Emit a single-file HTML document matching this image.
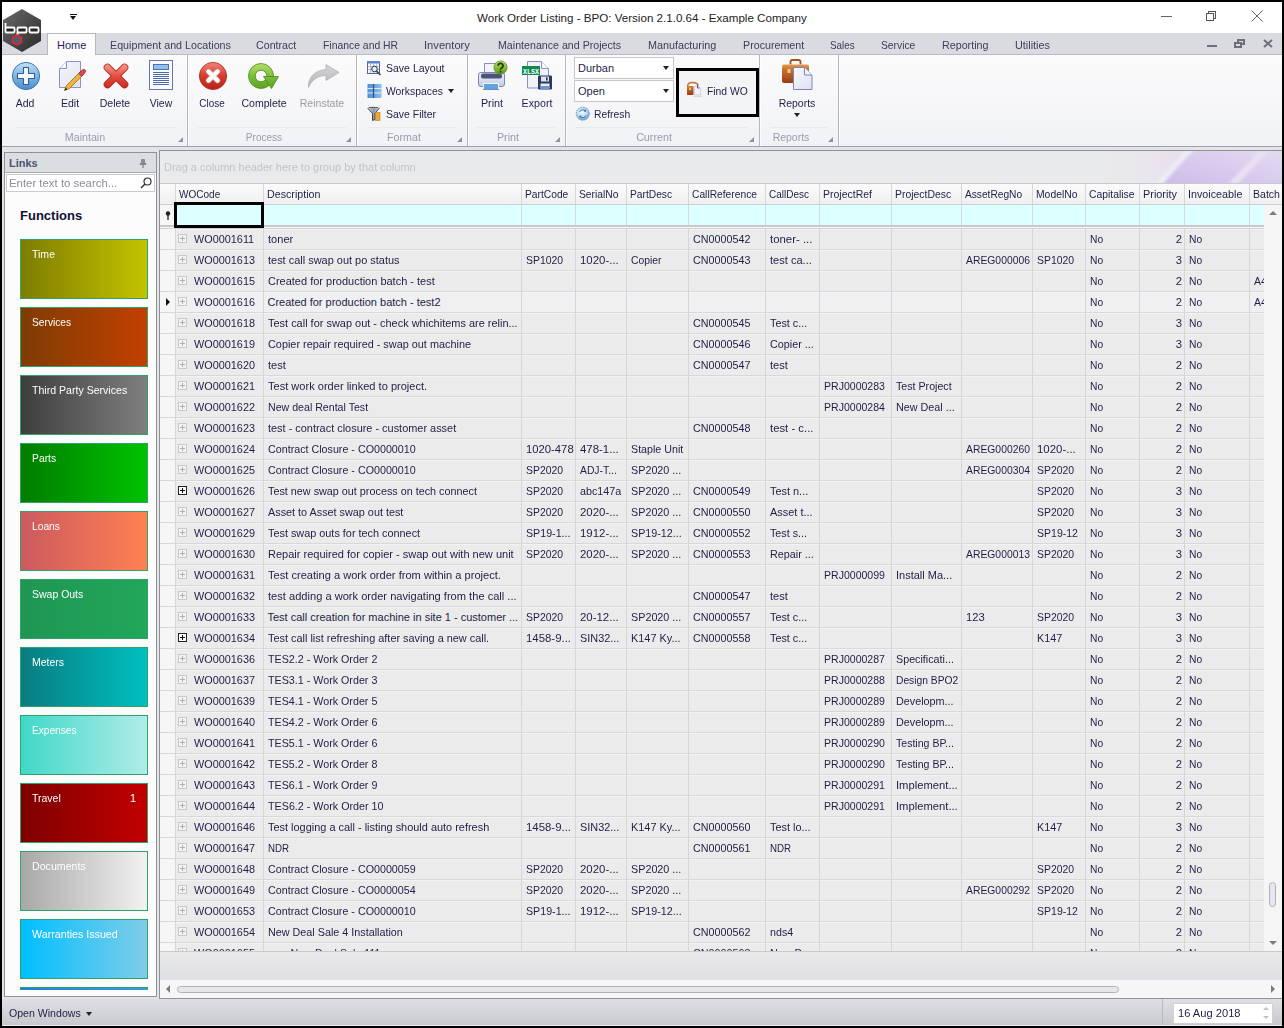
<!DOCTYPE html>
<html><head><meta charset="utf-8">
<style>
*{box-sizing:border-box;margin:0;padding:0}
html,body{width:1284px;height:1028px;overflow:hidden;background:#000;font-family:"Liberation Sans",sans-serif;font-size:11px;color:#1f1f3f}
.abs{position:absolute}
#titlebar{position:absolute;left:2px;top:2px;width:1280px;height:31px;background:#fff}
#title{position:absolute;left:477px;top:10.5px;font-size:11.6px;color:#222;white-space:nowrap}
#tabstrip{position:absolute;left:2px;top:33px;width:1280px;height:22px;background:#dadbe0;border-bottom:1px solid #b9bbc2}
.tab{position:absolute;top:38.5px;white-space:nowrap;color:#3b3d5a}
#hometab{position:absolute;left:47px;top:33px;width:49px;height:23px;background:#fbfbfc;border:1px solid #b6b8bf;border-bottom:none}
#ribbon{position:absolute;left:2px;top:55px;width:1280px;height:92px;background:linear-gradient(#fbfbfc,#f1f2f5);border-bottom:1px solid #9fa1a6}
.gsep{position:absolute;top:55px;width:1px;height:91px;background:#b4b7c0;box-shadow:1px 0 #fdfdfe}
.dl{position:absolute;width:0;height:0;border-left:5px solid transparent;border-bottom:5px solid #9092a0}
.glab{position:absolute;top:131px;color:#9a9cae;white-space:nowrap}
.gline{position:absolute;top:127px;height:1px;background:#e9eaee}
.blab{position:absolute;top:97px;white-space:nowrap;color:#1f1f46;text-align:center}
.slab{position:absolute;white-space:nowrap;color:#1f1f46}
#content{position:absolute;left:2px;top:147px;width:1280px;height:852px;background:#e3e4e8}
#links{position:absolute;left:4px;top:152px;width:153px;height:845px;background:#fcfcfc;border:1px solid #8f9196}
#linkshead{position:absolute;left:5px;top:153px;width:151px;height:20px;background:#dcdde1;border-bottom:1px solid #aaacb2}
#search{position:absolute;left:6px;top:174px;width:149px;height:18px;background:#fff;border:1px solid #c9cbd0}
.tile{position:absolute;left:20px;width:128px;height:60px;border:1px solid #2ea568}
.tt{position:absolute;left:11px;top:8px;color:#fff;white-space:nowrap}
.tnum{position:absolute;right:11px;top:8px;color:#fff}
#grid{position:absolute;left:159px;top:150px;width:1123px;height:849px;background:#e9e9eb;border:1px solid #8f9196;border-right:none}
#grouppanel{position:absolute;left:160px;top:151px;width:1122px;height:33px;background:#e9eaec;border-bottom:1px solid #c8c9cc}
#swoosh{position:absolute;left:1100px;top:151px;width:182px;height:32px;overflow:hidden}
#grptext{position:absolute;left:164px;top:161px;color:#b8b9be;white-space:nowrap}
#hdrrow{position:absolute;left:160px;top:184px;width:1122px;height:21px;background:linear-gradient(#fbfbfb,#f0f0f1);border-bottom:1px solid #cfd0d4}
.hc{position:absolute;top:184px;height:20px;border-left:1px solid #d6d7da;}
.hc span{position:absolute;left:3px;top:4px;white-space:nowrap;color:#1f1f46}
#filterrow{position:absolute;left:175px;top:205px;width:1089px;height:20px;background:#dcffff}
.fc{position:absolute;top:205px;height:20px;border-left:1px solid #d0dcdf}
#fsep{position:absolute;left:160px;top:225px;width:1104px;height:4px;background:#f7f7f7;border-top:2px solid #c9cacd;border-bottom:1px solid #d0d1d4}
#indcol{position:absolute;left:160px;top:184px;width:15px;height:767px;background:#f6f6f7}
#bodyclip{position:absolute;left:160px;top:229px;width:1104px;height:722px;overflow:hidden}
#bodyinner{position:absolute;left:-160px;top:-229px;width:1300px;height:1000px}
.row{position:absolute;left:175px;width:1125px;height:21px;background:#ebebeb;border-bottom:1px solid #d8d8da;box-shadow:inset 0 1px #f3f3f3}
.row.foc{background:#eff0f2}
.irow{position:absolute;left:160px;width:15px;height:21px;background:#f6f6f7;border-bottom:1px solid #d8d8da}
.row .c{position:absolute;top:4px;white-space:nowrap;color:#1f1f46}
.row .c.r{left:auto}
.vl{position:absolute;top:229px;width:1px;height:722px;background:#d5d6d9}
.exp{position:absolute;left:3px;top:5px;width:9px;height:9px;border:1px solid #c8c8c8;background:#f4f4f4}
.exp:before{content:"";position:absolute;left:1px;top:3px;width:5px;height:1px;background:#b0b0b0}
.exp:after{content:"";position:absolute;left:3px;top:1px;width:1px;height:5px;background:#b0b0b0}
.expd{position:absolute;left:3px;top:5px;width:9px;height:9px;border:1px solid #222;background:#fff}
.expd:before{content:"";position:absolute;left:1px;top:3px;width:5px;height:1px;background:#111}
.expd:after{content:"";position:absolute;left:3px;top:1px;width:1px;height:5px;background:#111}
.ind{position:absolute;left:-9px;top:6px;width:0;height:0;border-left:4px solid #111;border-top:4px solid transparent;border-bottom:4px solid transparent}
#vscroll{position:absolute;left:1264px;top:205px;width:18px;height:746px;background:#f5f5f6}
#footer{position:absolute;left:160px;top:951px;width:1122px;height:29px;background:linear-gradient(#e9e9eb,#dedfe2);border-top:1px solid #c9cacd}
#hscroll{position:absolute;left:160px;top:980px;width:1122px;height:18px;background:#f6f6f7}
#status{position:absolute;left:2px;top:999px;width:1280px;height:27px;background:linear-gradient(#dfe0e4,#c8c9ce);border-bottom:1px solid #e8e9ec}
#datebox{position:absolute;left:1173px;top:1003px;width:100px;height:21px;background:#fff;border:1px solid #d0d1d5}
.combo{position:absolute;left:574px;width:100px;height:22px;background:#fff;border:1px solid #c5c7cc}
.combo span{position:absolute;left:3px;top:4px;color:#1f1f46}
.combo i{position:absolute;right:4px;top:8px;width:0;height:0;border-left:3.5px solid transparent;border-right:3.5px solid transparent;border-top:4px solid #222}
#findwo{position:absolute;left:676px;top:68px;width:83px;height:49px;border:3px solid #000;background:#f3f4f6}
</style></head><body>
<div id="titlebar"></div>
<div id="title">Work Order Listing - BPO: Version 2.1.0.64 - Example Company</div>
<!-- window controls -->
<div class="abs" style="left:1161px;top:16px;width:11px;height:1px;background:#666"></div>
<div class="abs" style="left:1208px;top:11px;width:8px;height:8px;border:1px solid #555"></div>
<div class="abs" style="left:1206px;top:13px;width:8px;height:8px;border:1px solid #555;background:#fff"></div>
<svg class="abs" style="left:1251px;top:10px" width="12" height="12"><path d="M0.5 0.5L11.5 11.5M11.5 0.5L0.5 11.5" stroke="#666" stroke-width="1"/></svg>
<!-- quick access -->
<div class="abs" style="left:70px;top:14px;width:7px;height:1px;background:#111"></div>
<div class="abs" style="left:70px;top:16px;width:0;height:0;border-left:3.5px solid transparent;border-right:3.5px solid transparent;border-top:4px solid #111"></div>

<div id="tabstrip"></div>
<div id="hometab"></div>
<span class="tab" style="left:57px;color:#1f1f5a">Home</span>
<span class="tab" style="left:110px;transform:scaleX(0.974);transform-origin:left;">Equipment and Locations</span><span class="tab" style="left:256px;transform:scaleX(0.970);transform-origin:left;">Contract</span><span class="tab" style="left:323px;transform:scaleX(0.945);transform-origin:left;">Finance and HR</span><span class="tab" style="left:424px;transform:scaleX(1.015);transform-origin:left;">Inventory</span><span class="tab" style="left:498px;transform:scaleX(0.968);transform-origin:left;">Maintenance and Projects</span><span class="tab" style="left:648px;transform:scaleX(0.980);transform-origin:left;">Manufacturing</span><span class="tab" style="left:743px;transform:scaleX(0.972);transform-origin:left;">Procurement</span><span class="tab" style="left:830px;transform:scaleX(0.900);transform-origin:left;">Sales</span><span class="tab" style="left:881px;transform:scaleX(0.936);transform-origin:left;">Service</span><span class="tab" style="left:942px;transform:scaleX(0.974);transform-origin:left;">Reporting</span><span class="tab" style="left:1015px;transform:scaleX(0.986);transform-origin:left;">Utilities</span>
<!-- mdi controls -->
<div class="abs" style="left:1207px;top:45px;width:10px;height:2px;background:#6d6f7a"></div>
<div class="abs" style="left:1237px;top:39px;width:8px;height:6px;border:2px solid #6d6f7a;border-top-width:2px"></div>
<div class="abs" style="left:1234px;top:42px;width:8px;height:6px;border:2px solid #6d6f7a;background:#dadbe0"></div>
<svg class="abs" style="left:1263px;top:39px" width="10" height="9"><path d="M1 1L9 8M9 1L1 8" stroke="#6d6f7a" stroke-width="2"/></svg>

<!-- logo -->
<svg class="abs" style="left:0;top:0" width="46" height="56" viewBox="0 0 46 56">
<defs><linearGradient id="lg" x1="0" y1="0" x2="1" y2="1"><stop offset="0" stop-color="#6a6a6a"/><stop offset="0.5" stop-color="#4a4a4a"/><stop offset="1" stop-color="#2a2a2a"/></linearGradient></defs>
<polygon points="22,9 41,20 41,41 22,52 3,41 3,20" fill="url(#lg)"/>
<rect x="5.5" y="27.5" width="9" height="5" rx="1" fill="#222" stroke="#fff" stroke-width="1.8"/>
<rect x="17.5" y="27.5" width="9" height="5" rx="1" fill="#222" stroke="#fff" stroke-width="1.8"/>
<rect x="29.5" y="27.5" width="9" height="5" rx="1" fill="#222" stroke="#fff" stroke-width="1.8"/>
<line x1="5.5" y1="23" x2="5.5" y2="28" stroke="#fff" stroke-width="1.8"/>
<line x1="17.5" y1="32" x2="17.5" y2="36" stroke="#fff" stroke-width="1.8"/>
<polygon points="17,35 21.5,37.5 21.5,42.5 17,45 12.5,42.5 12.5,37.5" fill="#555a70" stroke="#e02828" stroke-width="1.5"/>
</svg>

<div id="ribbon"></div>
<div class="gsep" style="left:187px"></div>
<div class="gsep" style="left:356px"></div>
<div class="gsep" style="left:467px"></div>
<div class="gsep" style="left:565px"></div>
<div class="gsep" style="left:759px"></div>
<div class="gsep" style="left:838px"></div>
<div class="gline" style="left:16px;width:160px"></div>
<div class="gline" style="left:198px;width:148px"></div>
<div class="gline" style="left:367px;width:90px"></div>
<div class="gline" style="left:477px;width:78px"></div>
<div class="gline" style="left:576px;width:172px"></div>
<div class="gline" style="left:770px;width:58px"></div>
<div class="dl" style="left:178px;top:137px"></div><div class="dl" style="left:346px;top:137px"></div><div class="dl" style="left:457px;top:137px"></div><div class="dl" style="left:555px;top:137px"></div><div class="dl" style="left:749px;top:137px"></div><div class="dl" style="left:828px;top:137px"></div>
<span class="glab" style="left:25.3px;width:120px;text-align:center;;transform:scaleX(0.971);transform-origin:center;">Maintain</span>
<span class="glab" style="left:203.9px;width:120px;text-align:center;;transform:scaleX(0.912);transform-origin:center;">Process</span>
<span class="glab" style="left:343.5px;width:120px;text-align:center;;transform:scaleX(0.973);transform-origin:center;">Format</span>
<span class="glab" style="left:447.6px;width:120px;text-align:center;;transform:scaleX(0.981);transform-origin:center;">Print</span>
<span class="glab" style="left:594.3px;width:120px;text-align:center;;transform:scaleX(0.974);transform-origin:center;">Current</span>
<span class="glab" style="left:730.5px;width:120px;text-align:center;;transform:scaleX(0.952);transform-origin:center;">Reports</span>

<!-- Add -->
<svg class="abs" style="left:8px;top:58px" width="40" height="36" viewBox="8 58 40 36">
<defs><linearGradient id="ga" x1="0" y1="0" x2="0" y2="1"><stop offset="0" stop-color="#c2e0f6"/><stop offset="0.5" stop-color="#7fb6e2"/><stop offset="1" stop-color="#4a8bc8"/></linearGradient></defs>
<circle cx="26" cy="76" r="13.6" fill="url(#ga)" stroke="#3c74ae" stroke-width="1"/>
<path d="M23.5 67.5h5v6h6v5h-6v6h-5v-6h-6v-5h6z" fill="#f4f8fc" stroke="#2f5f98" stroke-width="1.1" stroke-linejoin="round"/>
</svg>
<span class="blab" style="left:-34.9px;width:120px;text-align:center;;transform:scaleX(0.952);transform-origin:center;">Add</span>
<!-- Edit -->
<svg class="abs" style="left:55px;top:58px" width="36" height="36" viewBox="55 58 36 36">
<defs><linearGradient id="gpage" x1="0" y1="0" x2="1" y2="1"><stop offset="0" stop-color="#f6f7fc"/><stop offset="1" stop-color="#dfe2ee"/></linearGradient></defs>
<path d="M66.5 61.5h14v26h-21v-19z" fill="url(#gpage)" stroke="#8a8fcf" stroke-width="1"/>
<path d="M59.5 68.5h7v-7" fill="#fafbff" stroke="#8a8fcf" stroke-width="1"/>
<path d="M64.5 90.5l2-5 14-14 3 3-14 14z" fill="#f0b43a" stroke="#9a6a1a" stroke-width="0.8"/>
<path d="M78.5 73.5l3-3 2.5-1.5 2 2-1.5 2.5-3 3z" fill="#d8454a" stroke="#9a2a2a" stroke-width="0.6"/>
<path d="M64.5 90.5l1-3 2 2z" fill="#222"/>
</svg>
<span class="blab" style="left:10.3px;width:120px;text-align:center;;transform:scaleX(0.955);transform-origin:center;">Edit</span>
<!-- Delete -->
<svg class="abs" style="left:98px;top:56px" width="36" height="36" viewBox="98 56 36 36">
<defs><linearGradient id="gdel" gradientUnits="userSpaceOnUse" x1="0" y1="64" x2="0" y2="88"><stop offset="0" stop-color="#f4a090"/><stop offset="0.5" stop-color="#e05040"/><stop offset="1" stop-color="#c82a1e"/></linearGradient></defs>
<path d="M107.5 67.5L124.5 84.5M124.5 67.5L107.5 84.5" stroke="#b8261a" stroke-width="7.6" stroke-linecap="round"/>
<path d="M107.5 67.5L124.5 84.5M124.5 67.5L107.5 84.5" stroke="url(#gdel)" stroke-width="6" stroke-linecap="round"/>
</svg>
<span class="blab" style="left:54.9px;width:120px;text-align:center;;transform:scaleX(0.959);transform-origin:center;">Delete</span>
<!-- View -->
<svg class="abs" style="left:146px;top:58px" width="30" height="34" viewBox="146 58 30 34">
<rect x="149.5" y="60.5" width="23" height="29" fill="#fbfcff" stroke="#6a70b8" stroke-width="1"/>
<rect x="153.5" y="64.5" width="15" height="5" fill="#90c0ee" stroke="#4a6cbc" stroke-width="1"/>
<path d="M153 72.5h16M153 74.5h16M153 76.5h16M153 78.5h16M153 80.5h16M153 82.5h16M153 84.5h16" stroke="#4a6ab4" stroke-width="1"/>
</svg>
<span class="blab" style="left:100.5px;width:120px;text-align:center;;transform:scaleX(0.951);transform-origin:center;">View</span>
<!-- Close -->
<svg class="abs" style="left:194px;top:56px" width="40" height="38" viewBox="194 56 40 38">
<defs><linearGradient id="gc" gradientUnits="userSpaceOnUse" x1="0" y1="62" x2="0" y2="90"><stop offset="0" stop-color="#f08a80"/><stop offset="0.5" stop-color="#d8382c"/><stop offset="1" stop-color="#b82418"/></linearGradient></defs>
<circle cx="213" cy="76" r="13.6" fill="url(#gc)" stroke="#b03026" stroke-width="0.9"/>
<path d="M208.5 71.5L217.5 80.5M217.5 71.5L208.5 80.5" stroke="#c9b0b0" stroke-width="5.4" stroke-linecap="round"/>
<path d="M208.5 71.5L217.5 80.5M217.5 71.5L208.5 80.5" stroke="#fafafa" stroke-width="4" stroke-linecap="round"/>
</svg>
<span class="blab" style="left:152.1px;width:120px;text-align:center;;transform:scaleX(0.901);transform-origin:center;">Close</span>
<!-- Complete -->
<svg class="abs" style="left:244px;top:56px" width="40" height="38" viewBox="244 56 40 38">
<defs><linearGradient id="gcomp" gradientUnits="userSpaceOnUse" x1="0" y1="63" x2="0" y2="89"><stop offset="0" stop-color="#b8e070"/><stop offset="0.5" stop-color="#7cc038"/><stop offset="1" stop-color="#5aa020"/></linearGradient></defs>
<path fill-rule="evenodd" d="M273.5 76A12.5 12.5 0 1 1 248.5 76A12.5 12.5 0 1 1 273.5 76zM266.8 76A5.8 5.8 0 1 0 255.2 76A5.8 5.8 0 1 0 266.8 76z" fill="url(#gcomp)" stroke="#4a8a1e" stroke-width="0.8"/>
<path d="M263.5 76.5H278.5L271.5 88.5z" fill="url(#gcomp)" stroke="#4a8a1e" stroke-width="0.8" stroke-linejoin="round"/>
</svg>
<span class="blab" style="left:203.7px;width:120px;text-align:center;;transform:scaleX(0.958);transform-origin:center;">Complete</span>
<!-- Reinstate -->
<svg class="abs" style="left:304px;top:60px" width="40" height="32" viewBox="304 60 40 32">
<defs><linearGradient id="grein" gradientUnits="userSpaceOnUse" x1="0" y1="64" x2="0" y2="88"><stop offset="0" stop-color="#d4d5d7"/><stop offset="1" stop-color="#b4b5b8"/></linearGradient></defs>
<path d="M308.5 87.5C308 78 314 70.5 326 69.5V64.5L339 72.5L326 80.5V75.5C318 75.5 311.5 80 308.5 87.5z" fill="url(#grein)" stroke="#b0b1b4" stroke-width="0.8" stroke-linejoin="round"/>
</svg>
<span class="blab" style="left:262.2px;width:120px;text-align:center;color:#9a9ba4;transform:scaleX(0.957);transform-origin:center;">Reinstate</span>
<!-- Format group -->
<svg class="abs" style="left:364px;top:58px" width="20" height="20" viewBox="364 58 20 20">
<rect x="367.5" y="61.5" width="12" height="12" fill="#f4f6fb" stroke="#4a66aa" stroke-width="1"/>
<rect x="367" y="61" width="13" height="2.5" fill="#5a86cc"/>
<path d="M370.5 63v10M373.5 63v10M376.5 63v10M368 66.5h11M368 69.5h11" stroke="#9aaad0" stroke-width="0.7"/>
<circle cx="374.5" cy="69" r="2.8" fill="#e8eef8" stroke="#333" stroke-width="1"/>
<path d="M376.5 71l4 4" stroke="#444" stroke-width="1.6"/>
</svg>
<span class="slab" style="left:386px;top:62px;transform:scaleX(0.956);transform-origin:left;">Save Layout</span>
<svg class="abs" style="left:364px;top:81px" width="20" height="20" viewBox="364 81 20 20">
<defs><linearGradient id="gws" x1="0" y1="0" x2="1" y2="0"><stop offset="0" stop-color="#4a90d8"/><stop offset="1" stop-color="#8cc0ec"/></linearGradient></defs>
<rect x="367.5" y="84" width="14" height="14" fill="url(#gws)"/>
<path d="M367.5 88.5h14M367.5 93h14" stroke="#f0e8d8" stroke-width="1"/>
<path d="M373.5 84v14" stroke="#2a56a0" stroke-width="1.4"/>
</svg>
<span class="slab" style="left:386px;top:85px;transform:scaleX(0.942);transform-origin:left;">Workspaces</span>
<div class="abs" style="left:448px;top:89px;width:0;height:0;border-left:3px solid transparent;border-right:3px solid transparent;border-top:4px solid #222"></div>
<svg class="abs" style="left:364px;top:104px" width="20" height="20" viewBox="364 104 20 20">
<defs><linearGradient id="gfun" x1="0" y1="0" x2="1" y2="0"><stop offset="0" stop-color="#e0e2e6"/><stop offset="0.5" stop-color="#8a9aae"/><stop offset="1" stop-color="#d0d4da"/></linearGradient></defs>
<path d="M368 108.5c0-1.5 11-1.5 11 0l-4 5v6l-2.5 1v-7z" fill="url(#gfun)" stroke="#333a44" stroke-width="0.9"/>
<rect x="375.5" y="112.5" width="4.5" height="8" fill="#f0a830" stroke="#c07818" stroke-width="0.6"/>
</svg>
<span class="slab" style="left:386px;top:108px;transform:scaleX(0.952);transform-origin:left;">Save Filter</span>
<!-- Print -->
<svg class="abs" style="left:472px;top:56px" width="40" height="38" viewBox="472 56 40 38">
<defs><linearGradient id="gpb" gradientUnits="userSpaceOnUse" x1="0" y1="72" x2="0" y2="87"><stop offset="0" stop-color="#eef0fa"/><stop offset="1" stop-color="#c4cae4"/></linearGradient>
<linearGradient id="gq" gradientUnits="userSpaceOnUse" x1="0" y1="61" x2="0" y2="74"><stop offset="0" stop-color="#b8e060"/><stop offset="1" stop-color="#5a9a18"/></linearGradient></defs>
<rect x="484.5" y="63.5" width="12" height="11" fill="#f2f3fb" stroke="#8a90c4" stroke-width="1"/>
<rect x="478.5" y="72.5" width="26" height="14" rx="2.5" fill="url(#gpb)" stroke="#7c84b8" stroke-width="1"/>
<rect x="481" y="73.5" width="21" height="5" rx="2" fill="#4c5478"/>
<rect x="483.5" y="83.5" width="15" height="6" fill="#5ea4e4" stroke="#f4f6fc" stroke-width="1"/>
<path d="M483 89.5h16" stroke="#7c84b8" stroke-width="1"/>
<circle cx="500.5" cy="67.5" r="6.6" fill="url(#gq)" stroke="#5a8a20" stroke-width="0.7"/>
<path d="M498.2 65.8a2.4 2.4 0 1 1 3.6 2c-1.2 0.6-1.3 1.2-1.3 2" fill="none" stroke="#23380c" stroke-width="1.7"/>
<rect x="499.6" y="70.8" width="1.8" height="1.8" fill="#23380c"/>
</svg>
<span class="blab" style="left:432.4px;width:120px;text-align:center;;transform:scaleX(0.981);transform-origin:center;">Print</span>
<!-- Export -->
<svg class="abs" style="left:518px;top:56px" width="38" height="38" viewBox="518 56 38 38">
<path d="M527.5 61.5h14l7 7v19.5h-21z" fill="#f0f1f8" stroke="#8890c4" stroke-width="1"/>
<path d="M541.5 61.5v7h7" fill="#fafbff" stroke="#8890c4" stroke-width="1"/>
<rect x="522" y="66" width="18" height="9" fill="#108a52"/>
<text x="523" y="73.6" font-size="7.4" fill="#fff" font-weight="bold" font-family="Liberation Mono" textLength="16" lengthAdjust="spacingAndGlyphs">XLSX</text>
<rect x="538" y="75.5" width="14" height="14" rx="1" fill="#2c3a58"/>
<rect x="541" y="76.5" width="8" height="5" fill="#dfe3ea"/>
<rect x="546" y="77.3" width="1.6" height="3.2" fill="#2c3a58"/>
<rect x="540.5" y="83.5" width="9" height="5" fill="#e8ecf4"/>
<rect x="540.5" y="86" width="9" height="2.5" fill="#5a9ae0"/>
</svg>
<span class="blab" style="left:477.2px;width:120px;text-align:center;;transform:scaleX(0.970);transform-origin:center;">Export</span>
<!-- Current -->
<div class="combo" style="top:57px"><span>Durban</span><i></i></div>
<div class="combo" style="top:80px"><span>Open</span><i></i></div>
<svg class="abs" style="left:572px;top:104px" width="20" height="20" viewBox="572 104 20 20">
<defs><radialGradient id="grf" cx="0.45" cy="0.4" r="0.6"><stop offset="0" stop-color="#f4fbff"/><stop offset="0.6" stop-color="#b8dcf6"/><stop offset="1" stop-color="#5a9ad8"/></radialGradient></defs>
<circle cx="582.8" cy="113.7" r="6.6" fill="url(#grf)" stroke="#6890b8" stroke-width="0.8" stroke-dasharray="1.6 1"/>
<path d="M579.5 112a3.6 3.6 0 0 1 6-1M586 115.5a3.6 3.6 0 0 1-6 1" fill="none" stroke="#4a6a90" stroke-width="1"/>
<path d="M585.5 109l0.8 2.6-2.6 0.2z M580 118.4l-0.8-2.6 2.6-0.2z" fill="#4a6a90"/>
</svg>
<span class="slab" style="left:594px;top:108px;transform:scaleX(0.940);transform-origin:left;">Refresh</span>
<div id="findwo"></div>
<svg class="abs" style="left:684px;top:80px" width="22" height="18" viewBox="684 80 22 18">
<defs><linearGradient id="gfw" gradientUnits="userSpaceOnUse" x1="0" y1="83" x2="0" y2="95"><stop offset="0" stop-color="#e09048"/><stop offset="1" stop-color="#9a3c12"/></linearGradient></defs>
<path d="M687.5 86.5c0-3 2-4 5-4s5 1 6 3" fill="none" stroke="#c0763a" stroke-width="1.6"/>
<rect x="687" y="86" width="6.5" height="9" rx="0.8" fill="url(#gfw)"/>
<rect x="689.2" y="87.5" width="1.6" height="2.5" fill="#f8d878"/>
<path d="M694.5 86.5h4l2 2v6.5h-6z" fill="#f2f4fa" stroke="#b8bccc" stroke-width="0.6"/>
<path d="M697.5 85v3h2" fill="none" stroke="#3a4a7a" stroke-width="0.9"/>
<path d="M693 96.5h9" stroke="#d8dae2" stroke-width="1"/>
</svg>
<span class="slab" style="left:707px;top:85px;transform:scaleX(0.938);transform-origin:left;">Find WO</span>
<!-- Reports -->
<svg class="abs" style="left:776px;top:56px" width="40" height="38" viewBox="776 56 40 38">
<defs><linearGradient id="gbc" gradientUnits="userSpaceOnUse" x1="0" y1="64" x2="0" y2="83"><stop offset="0" stop-color="#e8a050"/><stop offset="0.3" stop-color="#c87030"/><stop offset="1" stop-color="#983c14"/></linearGradient>
<linearGradient id="gdoc" gradientUnits="userSpaceOnUse" x1="793" y1="67" x2="812" y2="90"><stop offset="0" stop-color="#fafbff"/><stop offset="1" stop-color="#dde1f0"/></linearGradient></defs>
<path d="M790.5 64.5v-2.5a2 2 0 0 1 2-2h6a2 2 0 0 1 2 2v2.5" fill="none" stroke="#a0541c" stroke-width="1.8"/>
<rect x="782" y="64.5" width="27" height="18.5" rx="2" fill="url(#gbc)"/>
<rect x="787.5" y="69" width="3" height="4" fill="#f8d070"/>
<path d="M793.5 67.5h11l7.5 7.5v14.5h-18.5z" fill="url(#gdoc)" stroke="#7c84c4" stroke-width="1"/>
<path d="M804.5 67.5v7.5h7.5" fill="#f4f6fc" stroke="#7c84c4" stroke-width="1"/>
</svg>
<span class="blab" style="left:737.2px;width:120px;text-align:center;;transform:scaleX(0.952);transform-origin:center;">Reports</span>
<div class="abs" style="left:794px;top:113px;width:0;height:0;border-left:3.5px solid transparent;border-right:3.5px solid transparent;border-top:4px solid #222"></div>

<div id="content"></div>
<!-- Links panel -->
<div id="links"></div>
<div id="linkshead"></div>
<span class="abs" style="left:9px;top:157px;font-weight:bold;color:#4a5470">Links</span>
<svg class="abs" style="left:139px;top:159px" width="8" height="9"><path d="M2.5 0.5h3v4h1.5v1h-6v-1h1.5z" fill="#8a8c96" stroke="#6a6c76" stroke-width="0.6"/><path d="M4 5.5v3.5" stroke="#6a6c76" stroke-width="1"/></svg>
<div id="search"></div>
<span class="abs" style="left:9px;top:177px;color:#8a8d98;transform:scaleX(1.035);transform-origin:left">Enter text to search...</span>
<svg class="abs" style="left:140px;top:177px" width="12" height="12"><circle cx="7.5" cy="4.5" r="3.5" fill="none" stroke="#333" stroke-width="1.2"/><path d="M5 7L1 11" stroke="#333" stroke-width="1.4"/></svg>
<span class="abs" style="left:20px;top:208px;font-weight:bold;font-size:13px;color:#10103a">Functions</span>
<div class="tile" style="top:239px;background:linear-gradient(90deg,#7d7d00,#c3c300)"><span class="tt" style="transform:scaleX(0.956);transform-origin:left;">Time</span></div><div class="tile" style="top:307px;background:linear-gradient(90deg,#7e3c04,#c24000)"><span class="tt" style="transform:scaleX(0.928);transform-origin:left;">Services</span></div><div class="tile" style="top:375px;background:linear-gradient(90deg,#3e3e3e,#7f7f7f)"><span class="tt" style="transform:scaleX(0.961);transform-origin:left;">Third Party Services</span></div><div class="tile" style="top:443px;background:linear-gradient(90deg,#007d00,#00c200)"><span class="tt" style="transform:scaleX(0.939);transform-origin:left;">Parts</span></div><div class="tile" style="top:511px;background:linear-gradient(90deg,#cc5a60,#ff8050)"><span class="tt" style="transform:scaleX(0.932);transform-origin:left;">Loans</span></div><div class="tile" style="top:579px;background:linear-gradient(90deg,#1f9653,#21a75a)"><span class="tt" style="transform:scaleX(0.953);transform-origin:left;">Swap Outs</span></div><div class="tile" style="top:647px;background:linear-gradient(90deg,#097c80,#00c0c0)"><span class="tt" style="transform:scaleX(0.951);transform-origin:left;">Meters</span></div><div class="tile" style="top:715px;background:linear-gradient(90deg,#40d8c8,#b0ece8)"><span class="tt" style="transform:scaleX(0.921);transform-origin:left;">Expenses</span></div><div class="tile" style="top:783px;background:linear-gradient(90deg,#7e0000,#c20000)"><span class="tt" style="transform:scaleX(0.954);transform-origin:left;">Travel</span><span class="tnum">1</span></div><div class="tile" style="top:851px;background:linear-gradient(90deg,#a8a8a8,#f2f2f2)"><span class="tt" style="transform:scaleX(0.966);transform-origin:left;">Documents</span></div><div class="tile" style="top:919px;background:linear-gradient(90deg,#00bfff,#80cce8)"><span class="tt" style="transform:scaleX(0.972);transform-origin:left;">Warranties Issued</span></div><div class="tile" style="top:987px;background:linear-gradient(90deg,#2080d0,#30a0e0);height:3px;border-bottom:none"><span class="tt" style=""></span></div>
<div class="abs" style="left:4px;top:990px;width:153px;height:7px;background:#fcfcfc;border:1px solid #8f9196;border-top:none"></div>

<!-- Grid -->
<div id="grid"></div>
<div id="indcol"></div>
<div id="grouppanel"></div>
<svg id="swoosh" viewBox="0 0 182 32" width="182" height="32"><defs>
<linearGradient id="sw0" x1="0" x2="1"><stop offset="0" stop-color="#e9e9eb" stop-opacity="0"/><stop offset="0.4" stop-color="#e8e0ee"/><stop offset="1" stop-color="#e4daef"/></linearGradient>
<linearGradient id="sw1" x1="0" y1="1" x2="1" y2="0"><stop offset="0" stop-color="#cbbbe8"/><stop offset="0.5" stop-color="#d8cbee"/><stop offset="1" stop-color="#e4dbf0"/></linearGradient>
<filter id="bl" x="-20%" y="-20%" width="140%" height="140%"><feGaussianBlur stdDeviation="1.5"/></filter>
</defs>
<rect x="0" y="0" width="182" height="32" fill="url(#sw0)"/>
<g filter="url(#bl)">
<path d="M62 34C75 20 85 8 96 -2H184V34z" fill="url(#sw1)"/>
<path d="M58 34C70 20 80 8 91 -2" stroke="#f0ecf5" stroke-width="5" fill="none"/>
<path d="M132 34C145 20 155 10 166 -2" stroke="#e8e0f2" stroke-width="7" fill="none"/>
</g>
</svg>
<span class="abs sx" style="left:164px;top:161px;color:#c2c3c8;transform:scaleX(0.999);transform-origin:left;">Drag a column header here to group by that column</span>
<div id="hdrrow"></div>
<div class="hc" style="left:175px;width:88px"><span style="transform:scaleX(0.911);transform-origin:left;">WOCode</span></div><div class="hc" style="left:263px;width:258px"><span style="transform:scaleX(0.971);transform-origin:left;">Description</span></div><div class="hc" style="left:521px;width:54px"><span style="transform:scaleX(0.932);transform-origin:left;">PartCode</span></div><div class="hc" style="left:575px;width:51px"><span style="transform:scaleX(0.936);transform-origin:left;">SerialNo</span></div><div class="hc" style="left:626px;width:62px"><span style="transform:scaleX(0.931);transform-origin:left;">PartDesc</span></div><div class="hc" style="left:688px;width:77px"><span style="transform:scaleX(0.932);transform-origin:left;">CallReference</span></div><div class="hc" style="left:765px;width:54px"><span style="transform:scaleX(0.908);transform-origin:left;">CallDesc</span></div><div class="hc" style="left:819px;width:72px"><span style="transform:scaleX(0.954);transform-origin:left;">ProjectRef</span></div><div class="hc" style="left:891px;width:70px"><span style="transform:scaleX(0.947);transform-origin:left;">ProjectDesc</span></div><div class="hc" style="left:961px;width:71px"><span style="transform:scaleX(0.925);transform-origin:left;">AssetRegNo</span></div><div class="hc" style="left:1032px;width:53px"><span style="transform:scaleX(0.941);transform-origin:left;">ModelNo</span></div><div class="hc" style="left:1085px;width:54px"><span style="transform:scaleX(0.943);transform-origin:left;">Capitalise</span></div><div class="hc" style="left:1139px;width:45px"><span style="transform:scaleX(0.990);transform-origin:left;">Priority</span></div><div class="hc" style="left:1184px;width:65px"><span style="transform:scaleX(0.977);transform-origin:left;">Invoiceable</span></div><div class="hc" style="left:1249px;width:51px"><span style="transform:scaleX(0.957);transform-origin:left;">Batch</span></div>
<div id="filterrow"></div>
<div class="fc" style="left:175px;width:88px"></div><div class="fc" style="left:263px;width:258px"></div><div class="fc" style="left:521px;width:54px"></div><div class="fc" style="left:575px;width:51px"></div><div class="fc" style="left:626px;width:62px"></div><div class="fc" style="left:688px;width:77px"></div><div class="fc" style="left:765px;width:54px"></div><div class="fc" style="left:819px;width:72px"></div><div class="fc" style="left:891px;width:70px"></div><div class="fc" style="left:961px;width:71px"></div><div class="fc" style="left:1032px;width:53px"></div><div class="fc" style="left:1085px;width:54px"></div><div class="fc" style="left:1139px;width:45px"></div><div class="fc" style="left:1184px;width:65px"></div><div class="fc" style="left:1249px;width:51px"></div>
<svg class="abs" style="left:165px;top:211px" width="6" height="9"><circle cx="3" cy="2.5" r="2.2" fill="#222"/><path d="M3 4v5" stroke="#222" stroke-width="1.3"/></svg>
<div id="fsep"></div>
<div class="abs" style="left:174px;top:202px;width:90px;height:26px;border:3px solid #000;background:#dcffff"></div>

<div id="bodyclip"><div id="bodyinner">
<div class="irow" style="top:229px"></div>
<div class="row" style="top:229px">
<div class="exp"></div>
<span class="c" style="left:18.5px;transform:scaleX(0.987);transform-origin:left;">WO0001611</span>
<span class="c" style="left:92.5px;transform:scaleX(1.007);transform-origin:left;">toner</span>
<span class="c" style="left:517.5px;transform:scaleX(0.977);transform-origin:left;">CN0000542</span>
<span class="c" style="left:594.5px;transform:scaleX(1.035);transform-origin:left;">toner- ...</span>
<span class="c" style="left:914.5px;transform:scaleX(0.932);transform-origin:left;">No</span>
<span class="c r" style="right:118px;transform:scaleX(1.023);transform-origin:right;">2</span>
<span class="c" style="left:1013.5px;transform:scaleX(0.932);transform-origin:left;">No</span>
</div>
<div class="irow" style="top:250px"></div>
<div class="row" style="top:250px">
<div class="exp"></div>
<span class="c" style="left:18.5px;transform:scaleX(0.987);transform-origin:left;">WO0001613</span>
<span class="c" style="left:92.5px;transform:scaleX(0.996);transform-origin:left;">test call swap out po status</span>
<span class="c" style="left:350.5px;transform:scaleX(0.947);transform-origin:left;">SP1020</span>
<span class="c" style="left:404.5px;transform:scaleX(1.038);transform-origin:left;">1020-...</span>
<span class="c" style="left:455.5px;transform:scaleX(0.940);transform-origin:left;">Copier</span>
<span class="c" style="left:517.5px;transform:scaleX(0.977);transform-origin:left;">CN0000543</span>
<span class="c" style="left:594.5px;transform:scaleX(1.006);transform-origin:left;">test ca...</span>
<span class="c" style="left:790.5px;transform:scaleX(0.942);transform-origin:left;">AREG000006</span>
<span class="c" style="left:861.5px;transform:scaleX(0.947);transform-origin:left;">SP1020</span>
<span class="c" style="left:914.5px;transform:scaleX(0.932);transform-origin:left;">No</span>
<span class="c r" style="right:118px;transform:scaleX(1.023);transform-origin:right;">3</span>
<span class="c" style="left:1013.5px;transform:scaleX(0.932);transform-origin:left;">No</span>
</div>
<div class="irow" style="top:271px"></div>
<div class="row" style="top:271px">
<div class="exp"></div>
<span class="c" style="left:18.5px;transform:scaleX(0.987);transform-origin:left;">WO0001615</span>
<span class="c" style="left:92.5px;transform:scaleX(0.999);transform-origin:left;">Created for production batch - test</span>
<span class="c" style="left:914.5px;transform:scaleX(0.932);transform-origin:left;">No</span>
<span class="c r" style="right:118px;transform:scaleX(1.023);transform-origin:right;">2</span>
<span class="c" style="left:1013.5px;transform:scaleX(0.932);transform-origin:left;">No</span>
<span class="c" style="left:1078.5px;transform:scaleX(0.956);transform-origin:left;">A4</span>
</div>
<div class="irow" style="top:292px"></div>
<div class="row foc" style="top:292px">
<div class="ind"></div>
<div class="exp"></div>
<span class="c" style="left:18.5px;transform:scaleX(0.987);transform-origin:left;">WO0001616</span>
<span class="c" style="left:92.5px;transform:scaleX(1.000);transform-origin:left;">Created for production batch - test2</span>
<span class="c" style="left:914.5px;transform:scaleX(0.932);transform-origin:left;">No</span>
<span class="c r" style="right:118px;transform:scaleX(1.023);transform-origin:right;">2</span>
<span class="c" style="left:1013.5px;transform:scaleX(0.932);transform-origin:left;">No</span>
<span class="c" style="left:1078.5px;transform:scaleX(0.956);transform-origin:left;">A4</span>
</div>
<div class="irow" style="top:313px"></div>
<div class="row" style="top:313px">
<div class="exp"></div>
<span class="c" style="left:18.5px;transform:scaleX(0.987);transform-origin:left;">WO0001618</span>
<span class="c" style="left:92.5px;transform:scaleX(0.996);transform-origin:left;">Test call for swap out - check whichitems are relin...</span>
<span class="c" style="left:517.5px;transform:scaleX(0.977);transform-origin:left;">CN0000545</span>
<span class="c" style="left:594.5px;transform:scaleX(0.982);transform-origin:left;">Test c...</span>
<span class="c" style="left:914.5px;transform:scaleX(0.932);transform-origin:left;">No</span>
<span class="c r" style="right:118px;transform:scaleX(1.023);transform-origin:right;">3</span>
<span class="c" style="left:1013.5px;transform:scaleX(0.932);transform-origin:left;">No</span>
</div>
<div class="irow" style="top:334px"></div>
<div class="row" style="top:334px">
<div class="exp"></div>
<span class="c" style="left:18.5px;transform:scaleX(0.987);transform-origin:left;">WO0001619</span>
<span class="c" style="left:92.5px;transform:scaleX(0.988);transform-origin:left;">Copier repair required - swap out machine</span>
<span class="c" style="left:517.5px;transform:scaleX(0.977);transform-origin:left;">CN0000546</span>
<span class="c" style="left:594.5px;transform:scaleX(0.980);transform-origin:left;">Copier ...</span>
<span class="c" style="left:914.5px;transform:scaleX(0.932);transform-origin:left;">No</span>
<span class="c r" style="right:118px;transform:scaleX(1.023);transform-origin:right;">3</span>
<span class="c" style="left:1013.5px;transform:scaleX(0.932);transform-origin:left;">No</span>
</div>
<div class="irow" style="top:355px"></div>
<div class="row" style="top:355px">
<div class="exp"></div>
<span class="c" style="left:18.5px;transform:scaleX(0.987);transform-origin:left;">WO0001620</span>
<span class="c" style="left:92.5px;transform:scaleX(1.006);transform-origin:left;">test</span>
<span class="c" style="left:517.5px;transform:scaleX(0.977);transform-origin:left;">CN0000547</span>
<span class="c" style="left:594.5px;transform:scaleX(1.006);transform-origin:left;">test</span>
<span class="c" style="left:914.5px;transform:scaleX(0.932);transform-origin:left;">No</span>
<span class="c r" style="right:118px;transform:scaleX(1.023);transform-origin:right;">2</span>
<span class="c" style="left:1013.5px;transform:scaleX(0.932);transform-origin:left;">No</span>
</div>
<div class="irow" style="top:376px"></div>
<div class="row" style="top:376px">
<div class="exp"></div>
<span class="c" style="left:18.5px;transform:scaleX(0.987);transform-origin:left;">WO0001621</span>
<span class="c" style="left:92.5px;transform:scaleX(1.005);transform-origin:left;">Test work order linked to project.</span>
<span class="c" style="left:648.5px;transform:scaleX(0.958);transform-origin:left;">PRJ0000283</span>
<span class="c" style="left:720.5px;transform:scaleX(0.968);transform-origin:left;">Test Project</span>
<span class="c" style="left:914.5px;transform:scaleX(0.932);transform-origin:left;">No</span>
<span class="c r" style="right:118px;transform:scaleX(1.023);transform-origin:right;">2</span>
<span class="c" style="left:1013.5px;transform:scaleX(0.932);transform-origin:left;">No</span>
</div>
<div class="irow" style="top:397px"></div>
<div class="row" style="top:397px">
<div class="exp"></div>
<span class="c" style="left:18.5px;transform:scaleX(0.987);transform-origin:left;">WO0001622</span>
<span class="c" style="left:92.5px;transform:scaleX(0.965);transform-origin:left;">New deal Rental Test</span>
<span class="c" style="left:648.5px;transform:scaleX(0.958);transform-origin:left;">PRJ0000284</span>
<span class="c" style="left:720.5px;transform:scaleX(0.980);transform-origin:left;">New Deal ...</span>
<span class="c" style="left:914.5px;transform:scaleX(0.932);transform-origin:left;">No</span>
<span class="c r" style="right:118px;transform:scaleX(1.023);transform-origin:right;">2</span>
<span class="c" style="left:1013.5px;transform:scaleX(0.932);transform-origin:left;">No</span>
</div>
<div class="irow" style="top:418px"></div>
<div class="row" style="top:418px">
<div class="exp"></div>
<span class="c" style="left:18.5px;transform:scaleX(0.987);transform-origin:left;">WO0001623</span>
<span class="c" style="left:92.5px;transform:scaleX(0.993);transform-origin:left;">test - contract closure - customer asset</span>
<span class="c" style="left:517.5px;transform:scaleX(0.977);transform-origin:left;">CN0000548</span>
<span class="c" style="left:594.5px;transform:scaleX(1.030);transform-origin:left;">test - c...</span>
<span class="c" style="left:914.5px;transform:scaleX(0.932);transform-origin:left;">No</span>
<span class="c r" style="right:118px;transform:scaleX(1.023);transform-origin:right;">2</span>
<span class="c" style="left:1013.5px;transform:scaleX(0.932);transform-origin:left;">No</span>
</div>
<div class="irow" style="top:439px"></div>
<div class="row" style="top:439px">
<div class="exp"></div>
<span class="c" style="left:18.5px;transform:scaleX(0.987);transform-origin:left;">WO0001624</span>
<span class="c" style="left:92.5px;transform:scaleX(0.974);transform-origin:left;">Contract Closure - CO0000010</span>
<span class="c" style="left:350.5px;transform:scaleX(1.025);transform-origin:left;">1020-478</span>
<span class="c" style="left:404.5px;transform:scaleX(1.038);transform-origin:left;">478-1...</span>
<span class="c" style="left:455.5px;transform:scaleX(0.972);transform-origin:left;">Staple Unit</span>
<span class="c" style="left:790.5px;transform:scaleX(0.942);transform-origin:left;">AREG000260</span>
<span class="c" style="left:861.5px;transform:scaleX(1.038);transform-origin:left;">1020-...</span>
<span class="c" style="left:914.5px;transform:scaleX(0.932);transform-origin:left;">No</span>
<span class="c r" style="right:118px;transform:scaleX(1.023);transform-origin:right;">2</span>
<span class="c" style="left:1013.5px;transform:scaleX(0.932);transform-origin:left;">No</span>
</div>
<div class="irow" style="top:460px"></div>
<div class="row" style="top:460px">
<div class="exp"></div>
<span class="c" style="left:18.5px;transform:scaleX(0.987);transform-origin:left;">WO0001625</span>
<span class="c" style="left:92.5px;transform:scaleX(0.974);transform-origin:left;">Contract Closure - CO0000010</span>
<span class="c" style="left:350.5px;transform:scaleX(0.947);transform-origin:left;">SP2020</span>
<span class="c" style="left:404.5px;transform:scaleX(0.940);transform-origin:left;">ADJ-T...</span>
<span class="c" style="left:455.5px;transform:scaleX(0.980);transform-origin:left;">SP2020 ...</span>
<span class="c" style="left:790.5px;transform:scaleX(0.942);transform-origin:left;">AREG000304</span>
<span class="c" style="left:861.5px;transform:scaleX(0.947);transform-origin:left;">SP2020</span>
<span class="c" style="left:914.5px;transform:scaleX(0.932);transform-origin:left;">No</span>
<span class="c r" style="right:118px;transform:scaleX(1.023);transform-origin:right;">2</span>
<span class="c" style="left:1013.5px;transform:scaleX(0.932);transform-origin:left;">No</span>
</div>
<div class="irow" style="top:481px"></div>
<div class="row" style="top:481px">
<div class="expd"></div>
<span class="c" style="left:18.5px;transform:scaleX(0.987);transform-origin:left;">WO0001626</span>
<span class="c" style="left:92.5px;transform:scaleX(0.982);transform-origin:left;">Test new swap out process on tech connect</span>
<span class="c" style="left:350.5px;transform:scaleX(0.947);transform-origin:left;">SP2020</span>
<span class="c" style="left:404.5px;transform:scaleX(0.977);transform-origin:left;">abc147a</span>
<span class="c" style="left:455.5px;transform:scaleX(0.980);transform-origin:left;">SP2020 ...</span>
<span class="c" style="left:517.5px;transform:scaleX(0.977);transform-origin:left;">CN0000549</span>
<span class="c" style="left:594.5px;transform:scaleX(0.992);transform-origin:left;">Test n...</span>
<span class="c" style="left:861.5px;transform:scaleX(0.947);transform-origin:left;">SP2020</span>
<span class="c" style="left:914.5px;transform:scaleX(0.932);transform-origin:left;">No</span>
<span class="c r" style="right:118px;transform:scaleX(1.023);transform-origin:right;">3</span>
<span class="c" style="left:1013.5px;transform:scaleX(0.932);transform-origin:left;">No</span>
</div>
<div class="irow" style="top:502px"></div>
<div class="row" style="top:502px">
<div class="exp"></div>
<span class="c" style="left:18.5px;transform:scaleX(0.987);transform-origin:left;">WO0001627</span>
<span class="c" style="left:92.5px;transform:scaleX(0.984);transform-origin:left;">Asset to Asset swap out test</span>
<span class="c" style="left:350.5px;transform:scaleX(0.947);transform-origin:left;">SP2020</span>
<span class="c" style="left:404.5px;transform:scaleX(1.038);transform-origin:left;">2020-...</span>
<span class="c" style="left:455.5px;transform:scaleX(0.980);transform-origin:left;">SP2020 ...</span>
<span class="c" style="left:517.5px;transform:scaleX(0.977);transform-origin:left;">CN0000550</span>
<span class="c" style="left:594.5px;transform:scaleX(0.994);transform-origin:left;">Asset t...</span>
<span class="c" style="left:861.5px;transform:scaleX(0.947);transform-origin:left;">SP2020</span>
<span class="c" style="left:914.5px;transform:scaleX(0.932);transform-origin:left;">No</span>
<span class="c r" style="right:118px;transform:scaleX(1.023);transform-origin:right;">3</span>
<span class="c" style="left:1013.5px;transform:scaleX(0.932);transform-origin:left;">No</span>
</div>
<div class="irow" style="top:523px"></div>
<div class="row" style="top:523px">
<div class="exp"></div>
<span class="c" style="left:18.5px;transform:scaleX(0.987);transform-origin:left;">WO0001629</span>
<span class="c" style="left:92.5px;transform:scaleX(0.987);transform-origin:left;">Test swap outs for tech connect</span>
<span class="c" style="left:350.5px;transform:scaleX(0.970);transform-origin:left;">SP19-1...</span>
<span class="c" style="left:404.5px;transform:scaleX(1.038);transform-origin:left;">1912-...</span>
<span class="c" style="left:455.5px;transform:scaleX(0.977);transform-origin:left;">SP19-12...</span>
<span class="c" style="left:517.5px;transform:scaleX(0.977);transform-origin:left;">CN0000552</span>
<span class="c" style="left:594.5px;transform:scaleX(0.976);transform-origin:left;">Test s...</span>
<span class="c" style="left:861.5px;transform:scaleX(0.956);transform-origin:left;">SP19-12</span>
<span class="c" style="left:914.5px;transform:scaleX(0.932);transform-origin:left;">No</span>
<span class="c r" style="right:118px;transform:scaleX(1.023);transform-origin:right;">3</span>
<span class="c" style="left:1013.5px;transform:scaleX(0.932);transform-origin:left;">No</span>
</div>
<div class="irow" style="top:544px"></div>
<div class="row" style="top:544px">
<div class="exp"></div>
<span class="c" style="left:18.5px;transform:scaleX(0.987);transform-origin:left;">WO0001630</span>
<span class="c" style="left:92.5px;transform:scaleX(1.002);transform-origin:left;">Repair required for copier - swap out with new unit</span>
<span class="c" style="left:350.5px;transform:scaleX(0.947);transform-origin:left;">SP2020</span>
<span class="c" style="left:404.5px;transform:scaleX(1.038);transform-origin:left;">2020-...</span>
<span class="c" style="left:455.5px;transform:scaleX(0.980);transform-origin:left;">SP2020 ...</span>
<span class="c" style="left:517.5px;transform:scaleX(0.977);transform-origin:left;">CN0000553</span>
<span class="c" style="left:594.5px;transform:scaleX(0.981);transform-origin:left;">Repair ...</span>
<span class="c" style="left:790.5px;transform:scaleX(0.942);transform-origin:left;">AREG000013</span>
<span class="c" style="left:861.5px;transform:scaleX(0.947);transform-origin:left;">SP2020</span>
<span class="c" style="left:914.5px;transform:scaleX(0.932);transform-origin:left;">No</span>
<span class="c r" style="right:118px;transform:scaleX(1.023);transform-origin:right;">3</span>
<span class="c" style="left:1013.5px;transform:scaleX(0.932);transform-origin:left;">No</span>
</div>
<div class="irow" style="top:565px"></div>
<div class="row" style="top:565px">
<div class="exp"></div>
<span class="c" style="left:18.5px;transform:scaleX(0.987);transform-origin:left;">WO0001631</span>
<span class="c" style="left:92.5px;transform:scaleX(1.008);transform-origin:left;">Test creating a work order from within a project.</span>
<span class="c" style="left:648.5px;transform:scaleX(0.958);transform-origin:left;">PRJ0000099</span>
<span class="c" style="left:720.5px;transform:scaleX(0.999);transform-origin:left;">Install Ma...</span>
<span class="c" style="left:914.5px;transform:scaleX(0.932);transform-origin:left;">No</span>
<span class="c r" style="right:118px;transform:scaleX(1.023);transform-origin:right;">2</span>
<span class="c" style="left:1013.5px;transform:scaleX(0.932);transform-origin:left;">No</span>
</div>
<div class="irow" style="top:586px"></div>
<div class="row" style="top:586px">
<div class="exp"></div>
<span class="c" style="left:18.5px;transform:scaleX(0.987);transform-origin:left;">WO0001632</span>
<span class="c" style="left:92.5px;transform:scaleX(1.009);transform-origin:left;">test adding a work order navigating from the call ...</span>
<span class="c" style="left:517.5px;transform:scaleX(0.977);transform-origin:left;">CN0000547</span>
<span class="c" style="left:594.5px;transform:scaleX(1.006);transform-origin:left;">test</span>
<span class="c" style="left:914.5px;transform:scaleX(0.932);transform-origin:left;">No</span>
<span class="c r" style="right:118px;transform:scaleX(1.023);transform-origin:right;">2</span>
<span class="c" style="left:1013.5px;transform:scaleX(0.932);transform-origin:left;">No</span>
</div>
<div class="irow" style="top:607px"></div>
<div class="row" style="top:607px">
<div class="exp"></div>
<span class="c" style="left:18.5px;transform:scaleX(0.987);transform-origin:left;">WO0001633</span>
<span class="c" style="left:92.5px;transform:scaleX(1.000);transform-origin:left;">Test call creation for machine in site 1 - customer ...</span>
<span class="c" style="left:350.5px;transform:scaleX(0.947);transform-origin:left;">SP2020</span>
<span class="c" style="left:404.5px;transform:scaleX(1.038);transform-origin:left;">20-12...</span>
<span class="c" style="left:455.5px;transform:scaleX(0.980);transform-origin:left;">SP2020 ...</span>
<span class="c" style="left:517.5px;transform:scaleX(0.977);transform-origin:left;">CN0000557</span>
<span class="c" style="left:594.5px;transform:scaleX(0.982);transform-origin:left;">Test c...</span>
<span class="c" style="left:790.5px;transform:scaleX(1.023);transform-origin:left;">123</span>
<span class="c" style="left:861.5px;transform:scaleX(0.947);transform-origin:left;">SP2020</span>
<span class="c" style="left:914.5px;transform:scaleX(0.932);transform-origin:left;">No</span>
<span class="c r" style="right:118px;transform:scaleX(1.023);transform-origin:right;">3</span>
<span class="c" style="left:1013.5px;transform:scaleX(0.932);transform-origin:left;">No</span>
</div>
<div class="irow" style="top:628px"></div>
<div class="row" style="top:628px">
<div class="expd"></div>
<span class="c" style="left:18.5px;transform:scaleX(0.987);transform-origin:left;">WO0001634</span>
<span class="c" style="left:92.5px;transform:scaleX(0.991);transform-origin:left;">Test call list refreshing after saving a new call.</span>
<span class="c" style="left:350.5px;transform:scaleX(1.036);transform-origin:left;">1458-9...</span>
<span class="c" style="left:404.5px;transform:scaleX(0.989);transform-origin:left;">SIN32...</span>
<span class="c" style="left:455.5px;transform:scaleX(0.992);transform-origin:left;">K147 Ky...</span>
<span class="c" style="left:517.5px;transform:scaleX(0.977);transform-origin:left;">CN0000558</span>
<span class="c" style="left:594.5px;transform:scaleX(0.982);transform-origin:left;">Test c...</span>
<span class="c" style="left:861.5px;transform:scaleX(0.982);transform-origin:left;">K147</span>
<span class="c" style="left:914.5px;transform:scaleX(0.932);transform-origin:left;">No</span>
<span class="c r" style="right:118px;transform:scaleX(1.023);transform-origin:right;">3</span>
<span class="c" style="left:1013.5px;transform:scaleX(0.932);transform-origin:left;">No</span>
</div>
<div class="irow" style="top:649px"></div>
<div class="row" style="top:649px">
<div class="exp"></div>
<span class="c" style="left:18.5px;transform:scaleX(0.987);transform-origin:left;">WO0001636</span>
<span class="c" style="left:92.5px;transform:scaleX(0.974);transform-origin:left;">TES2.2 - Work Order 2</span>
<span class="c" style="left:648.5px;transform:scaleX(0.958);transform-origin:left;">PRJ0000287</span>
<span class="c" style="left:720.5px;transform:scaleX(0.976);transform-origin:left;">Specificati...</span>
<span class="c" style="left:914.5px;transform:scaleX(0.932);transform-origin:left;">No</span>
<span class="c r" style="right:118px;transform:scaleX(1.023);transform-origin:right;">2</span>
<span class="c" style="left:1013.5px;transform:scaleX(0.932);transform-origin:left;">No</span>
</div>
<div class="irow" style="top:670px"></div>
<div class="row" style="top:670px">
<div class="exp"></div>
<span class="c" style="left:18.5px;transform:scaleX(0.987);transform-origin:left;">WO0001637</span>
<span class="c" style="left:92.5px;transform:scaleX(0.974);transform-origin:left;">TES3.1 - Work Order 3</span>
<span class="c" style="left:648.5px;transform:scaleX(0.958);transform-origin:left;">PRJ0000288</span>
<span class="c" style="left:720.5px;transform:scaleX(0.933);transform-origin:left;">Design BPO2</span>
<span class="c" style="left:914.5px;transform:scaleX(0.932);transform-origin:left;">No</span>
<span class="c r" style="right:118px;transform:scaleX(1.023);transform-origin:right;">2</span>
<span class="c" style="left:1013.5px;transform:scaleX(0.932);transform-origin:left;">No</span>
</div>
<div class="irow" style="top:691px"></div>
<div class="row" style="top:691px">
<div class="exp"></div>
<span class="c" style="left:18.5px;transform:scaleX(0.987);transform-origin:left;">WO0001639</span>
<span class="c" style="left:92.5px;transform:scaleX(0.974);transform-origin:left;">TES4.1 - Work Order 5</span>
<span class="c" style="left:648.5px;transform:scaleX(0.958);transform-origin:left;">PRJ0000289</span>
<span class="c" style="left:720.5px;transform:scaleX(0.981);transform-origin:left;">Developm...</span>
<span class="c" style="left:914.5px;transform:scaleX(0.932);transform-origin:left;">No</span>
<span class="c r" style="right:118px;transform:scaleX(1.023);transform-origin:right;">2</span>
<span class="c" style="left:1013.5px;transform:scaleX(0.932);transform-origin:left;">No</span>
</div>
<div class="irow" style="top:712px"></div>
<div class="row" style="top:712px">
<div class="exp"></div>
<span class="c" style="left:18.5px;transform:scaleX(0.987);transform-origin:left;">WO0001640</span>
<span class="c" style="left:92.5px;transform:scaleX(0.974);transform-origin:left;">TES4.2 - Work Order 6</span>
<span class="c" style="left:648.5px;transform:scaleX(0.958);transform-origin:left;">PRJ0000289</span>
<span class="c" style="left:720.5px;transform:scaleX(0.981);transform-origin:left;">Developm...</span>
<span class="c" style="left:914.5px;transform:scaleX(0.932);transform-origin:left;">No</span>
<span class="c r" style="right:118px;transform:scaleX(1.023);transform-origin:right;">2</span>
<span class="c" style="left:1013.5px;transform:scaleX(0.932);transform-origin:left;">No</span>
</div>
<div class="irow" style="top:733px"></div>
<div class="row" style="top:733px">
<div class="exp"></div>
<span class="c" style="left:18.5px;transform:scaleX(0.987);transform-origin:left;">WO0001641</span>
<span class="c" style="left:92.5px;transform:scaleX(0.974);transform-origin:left;">TES5.1 - Work Order 6</span>
<span class="c" style="left:648.5px;transform:scaleX(0.958);transform-origin:left;">PRJ0000290</span>
<span class="c" style="left:720.5px;transform:scaleX(0.960);transform-origin:left;">Testing BP...</span>
<span class="c" style="left:914.5px;transform:scaleX(0.932);transform-origin:left;">No</span>
<span class="c r" style="right:118px;transform:scaleX(1.023);transform-origin:right;">2</span>
<span class="c" style="left:1013.5px;transform:scaleX(0.932);transform-origin:left;">No</span>
</div>
<div class="irow" style="top:754px"></div>
<div class="row" style="top:754px">
<div class="exp"></div>
<span class="c" style="left:18.5px;transform:scaleX(0.987);transform-origin:left;">WO0001642</span>
<span class="c" style="left:92.5px;transform:scaleX(0.974);transform-origin:left;">TES5.2 - Work Order 8</span>
<span class="c" style="left:648.5px;transform:scaleX(0.958);transform-origin:left;">PRJ0000290</span>
<span class="c" style="left:720.5px;transform:scaleX(0.960);transform-origin:left;">Testing BP...</span>
<span class="c" style="left:914.5px;transform:scaleX(0.932);transform-origin:left;">No</span>
<span class="c r" style="right:118px;transform:scaleX(1.023);transform-origin:right;">2</span>
<span class="c" style="left:1013.5px;transform:scaleX(0.932);transform-origin:left;">No</span>
</div>
<div class="irow" style="top:775px"></div>
<div class="row" style="top:775px">
<div class="exp"></div>
<span class="c" style="left:18.5px;transform:scaleX(0.987);transform-origin:left;">WO0001643</span>
<span class="c" style="left:92.5px;transform:scaleX(0.974);transform-origin:left;">TES6.1 - Work Order 9</span>
<span class="c" style="left:648.5px;transform:scaleX(0.958);transform-origin:left;">PRJ0000291</span>
<span class="c" style="left:720.5px;transform:scaleX(1.020);transform-origin:left;">Implement...</span>
<span class="c" style="left:914.5px;transform:scaleX(0.932);transform-origin:left;">No</span>
<span class="c r" style="right:118px;transform:scaleX(1.023);transform-origin:right;">2</span>
<span class="c" style="left:1013.5px;transform:scaleX(0.932);transform-origin:left;">No</span>
</div>
<div class="irow" style="top:796px"></div>
<div class="row" style="top:796px">
<div class="exp"></div>
<span class="c" style="left:18.5px;transform:scaleX(0.987);transform-origin:left;">WO0001644</span>
<span class="c" style="left:92.5px;transform:scaleX(0.976);transform-origin:left;">TES6.2 - Work Order 10</span>
<span class="c" style="left:648.5px;transform:scaleX(0.958);transform-origin:left;">PRJ0000291</span>
<span class="c" style="left:720.5px;transform:scaleX(1.020);transform-origin:left;">Implement...</span>
<span class="c" style="left:914.5px;transform:scaleX(0.932);transform-origin:left;">No</span>
<span class="c r" style="right:118px;transform:scaleX(1.023);transform-origin:right;">2</span>
<span class="c" style="left:1013.5px;transform:scaleX(0.932);transform-origin:left;">No</span>
</div>
<div class="irow" style="top:817px"></div>
<div class="row" style="top:817px">
<div class="exp"></div>
<span class="c" style="left:18.5px;transform:scaleX(0.987);transform-origin:left;">WO0001646</span>
<span class="c" style="left:92.5px;transform:scaleX(0.994);transform-origin:left;">Test logging a call - listing should auto refresh</span>
<span class="c" style="left:350.5px;transform:scaleX(1.036);transform-origin:left;">1458-9...</span>
<span class="c" style="left:404.5px;transform:scaleX(0.989);transform-origin:left;">SIN32...</span>
<span class="c" style="left:455.5px;transform:scaleX(0.992);transform-origin:left;">K147 Ky...</span>
<span class="c" style="left:517.5px;transform:scaleX(0.977);transform-origin:left;">CN0000560</span>
<span class="c" style="left:594.5px;transform:scaleX(0.991);transform-origin:left;">Test lo...</span>
<span class="c" style="left:861.5px;transform:scaleX(0.982);transform-origin:left;">K147</span>
<span class="c" style="left:914.5px;transform:scaleX(0.932);transform-origin:left;">No</span>
<span class="c r" style="right:118px;transform:scaleX(1.023);transform-origin:right;">3</span>
<span class="c" style="left:1013.5px;transform:scaleX(0.932);transform-origin:left;">No</span>
</div>
<div class="irow" style="top:838px"></div>
<div class="row" style="top:838px">
<div class="exp"></div>
<span class="c" style="left:18.5px;transform:scaleX(0.987);transform-origin:left;">WO0001647</span>
<span class="c" style="left:92.5px;transform:scaleX(0.886);transform-origin:left;">NDR</span>
<span class="c" style="left:517.5px;transform:scaleX(0.977);transform-origin:left;">CN0000561</span>
<span class="c" style="left:594.5px;transform:scaleX(0.886);transform-origin:left;">NDR</span>
<span class="c" style="left:914.5px;transform:scaleX(0.932);transform-origin:left;">No</span>
<span class="c r" style="right:118px;transform:scaleX(1.023);transform-origin:right;">2</span>
<span class="c" style="left:1013.5px;transform:scaleX(0.932);transform-origin:left;">No</span>
</div>
<div class="irow" style="top:859px"></div>
<div class="row" style="top:859px">
<div class="exp"></div>
<span class="c" style="left:18.5px;transform:scaleX(0.987);transform-origin:left;">WO0001648</span>
<span class="c" style="left:92.5px;transform:scaleX(0.974);transform-origin:left;">Contract Closure - CO0000059</span>
<span class="c" style="left:350.5px;transform:scaleX(0.947);transform-origin:left;">SP2020</span>
<span class="c" style="left:404.5px;transform:scaleX(1.038);transform-origin:left;">2020-...</span>
<span class="c" style="left:455.5px;transform:scaleX(0.980);transform-origin:left;">SP2020 ...</span>
<span class="c" style="left:861.5px;transform:scaleX(0.947);transform-origin:left;">SP2020</span>
<span class="c" style="left:914.5px;transform:scaleX(0.932);transform-origin:left;">No</span>
<span class="c r" style="right:118px;transform:scaleX(1.023);transform-origin:right;">2</span>
<span class="c" style="left:1013.5px;transform:scaleX(0.932);transform-origin:left;">No</span>
</div>
<div class="irow" style="top:880px"></div>
<div class="row" style="top:880px">
<div class="exp"></div>
<span class="c" style="left:18.5px;transform:scaleX(0.987);transform-origin:left;">WO0001649</span>
<span class="c" style="left:92.5px;transform:scaleX(0.974);transform-origin:left;">Contract Closure - CO0000054</span>
<span class="c" style="left:350.5px;transform:scaleX(0.947);transform-origin:left;">SP2020</span>
<span class="c" style="left:404.5px;transform:scaleX(1.038);transform-origin:left;">2020-...</span>
<span class="c" style="left:455.5px;transform:scaleX(0.980);transform-origin:left;">SP2020 ...</span>
<span class="c" style="left:790.5px;transform:scaleX(0.942);transform-origin:left;">AREG000292</span>
<span class="c" style="left:861.5px;transform:scaleX(0.947);transform-origin:left;">SP2020</span>
<span class="c" style="left:914.5px;transform:scaleX(0.932);transform-origin:left;">No</span>
<span class="c r" style="right:118px;transform:scaleX(1.023);transform-origin:right;">2</span>
<span class="c" style="left:1013.5px;transform:scaleX(0.932);transform-origin:left;">No</span>
</div>
<div class="irow" style="top:901px"></div>
<div class="row" style="top:901px">
<div class="exp"></div>
<span class="c" style="left:18.5px;transform:scaleX(0.987);transform-origin:left;">WO0001653</span>
<span class="c" style="left:92.5px;transform:scaleX(0.974);transform-origin:left;">Contract Closure - CO0000010</span>
<span class="c" style="left:350.5px;transform:scaleX(0.970);transform-origin:left;">SP19-1...</span>
<span class="c" style="left:404.5px;transform:scaleX(1.038);transform-origin:left;">1912-...</span>
<span class="c" style="left:455.5px;transform:scaleX(0.977);transform-origin:left;">SP19-12...</span>
<span class="c" style="left:861.5px;transform:scaleX(0.956);transform-origin:left;">SP19-12</span>
<span class="c" style="left:914.5px;transform:scaleX(0.932);transform-origin:left;">No</span>
<span class="c r" style="right:118px;transform:scaleX(1.023);transform-origin:right;">2</span>
<span class="c" style="left:1013.5px;transform:scaleX(0.932);transform-origin:left;">No</span>
</div>
<div class="irow" style="top:922px"></div>
<div class="row" style="top:922px">
<div class="exp"></div>
<span class="c" style="left:18.5px;transform:scaleX(0.987);transform-origin:left;">WO0001654</span>
<span class="c" style="left:92.5px;transform:scaleX(0.980);transform-origin:left;">New Deal Sale 4 Installation</span>
<span class="c" style="left:517.5px;transform:scaleX(0.977);transform-origin:left;">CN0000562</span>
<span class="c" style="left:594.5px;transform:scaleX(0.972);transform-origin:left;">nds4</span>
<span class="c" style="left:914.5px;transform:scaleX(0.932);transform-origin:left;">No</span>
<span class="c r" style="right:118px;transform:scaleX(1.023);transform-origin:right;">2</span>
<span class="c" style="left:1013.5px;transform:scaleX(0.932);transform-origin:left;">No</span>
</div>
<div class="irow" style="top:943px"></div>
<div class="row" style="top:943px">
<div class="exp"></div>
<span class="c" style="left:18.5px;transform:scaleX(0.987);transform-origin:left;">WO0001655</span>
<span class="c" style="left:92.5px;transform:scaleX(0.972);transform-origin:left;">new New Deal Sale 111</span>
<span class="c" style="left:517.5px;transform:scaleX(0.977);transform-origin:left;">CN0000563</span>
<span class="c" style="left:594.5px;transform:scaleX(0.981);transform-origin:left;">New D...</span>
<span class="c" style="left:914.5px;transform:scaleX(0.932);transform-origin:left;">No</span>
<span class="c r" style="right:118px;transform:scaleX(1.023);transform-origin:right;">2</span>
<span class="c" style="left:1013.5px;transform:scaleX(0.932);transform-origin:left;">No</span>
</div>
<div class="vl" style="left:175px"></div><div class="vl" style="left:263px"></div><div class="vl" style="left:521px"></div><div class="vl" style="left:575px"></div><div class="vl" style="left:626px"></div><div class="vl" style="left:688px"></div><div class="vl" style="left:765px"></div><div class="vl" style="left:819px"></div><div class="vl" style="left:891px"></div><div class="vl" style="left:961px"></div><div class="vl" style="left:1032px"></div><div class="vl" style="left:1085px"></div><div class="vl" style="left:1139px"></div><div class="vl" style="left:1184px"></div><div class="vl" style="left:1249px"></div><div class="vl" style="left:175px"></div>
</div></div>
<div id="vscroll"></div>
<div class="abs" style="left:1269px;top:211px;width:0;height:0;border-left:4px solid transparent;border-right:4px solid transparent;border-bottom:4px solid #7a7c84"></div>
<div class="abs" style="left:1269px;top:882px;width:7px;height:25px;border:1px solid #b0b2b8;border-radius:4px;background:#e6e7ea"></div>
<div class="abs" style="left:1269px;top:941px;width:0;height:0;border-left:4px solid transparent;border-right:4px solid transparent;border-top:4px solid #7a7c84"></div>
<div id="footer"></div>
<div id="hscroll"></div>
<div class="abs" style="left:166px;top:985px;width:0;height:0;border-top:4px solid transparent;border-bottom:4px solid transparent;border-right:4px solid #7a7c84"></div>
<div class="abs" style="left:177px;top:986px;width:942px;height:7px;border:1px solid #b0b2b8;border-radius:4px;background:#e6e7ea"></div>
<div class="abs" style="left:1271px;top:985px;width:0;height:0;border-top:4px solid transparent;border-bottom:4px solid transparent;border-left:4px solid #7a7c84"></div>

<!-- status -->
<div id="status"></div>
<span class="abs sx" style="left:9px;top:1007px;color:#1f1f46;transform:scaleX(0.961);transform-origin:left;">Open Windows</span>
<div class="abs" style="left:86px;top:1012px;width:0;height:0;border-left:3px solid transparent;border-right:3px solid transparent;border-top:4px solid #222"></div>
<div class="abs" style="left:1162px;top:999px;width:1px;height:26px;background:#b8bac0"></div>
<div id="datebox"></div>
<span class="abs sx" style="left:1178px;top:1007px;color:#1f1f46;transform:scaleX(1.012);transform-origin:left;">16 Aug 2018</span>
<div class="abs" style="left:1263px;top:1007px;width:0;height:0;border-left:3px solid transparent;border-right:3px solid transparent;border-bottom:3px solid #c0c0c8"></div>
<div class="abs" style="left:1263px;top:1016px;width:0;height:0;border-left:3px solid transparent;border-right:3px solid transparent;border-top:3px solid #c0c0c8"></div>
</body></html>
